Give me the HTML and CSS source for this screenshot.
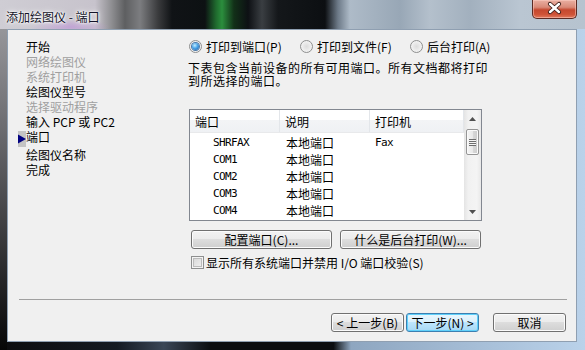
FILE: index.html
```html
<!DOCTYPE html>
<html lang="zh-CN">
  <head>
    <meta charset="UTF-8" />
    <title>添加绘图仪 - 端口</title>
    <link rel="stylesheet" href="styles.css">
  </head>

  <body>
    <div class="window">
      <div class="titlebar">
        <span class="title">添加绘图仪 - 端口</span>
        <div class="close">
          <svg width="45" height="19" viewBox="0 0 45 19">
            <path d="M18 5 L27 13 M27 5 L18 13" stroke="#3b1d18" stroke-width="4.2" stroke-linecap="round" fill="none" />
            <path d="M18 5 L27 13 M27 5 L18 13" stroke="#ffffff" stroke-width="2.4" stroke-linecap="round" fill="none" />
          </svg>
        </div>
      </div>

      <div class="client">
        <div class="main">
          <ul class="steps">
            <li>开始</li>
            <li class="off">网络绘图仪</li>
            <li class="off">系统打印机</li>
            <li>绘图仪型号</li>
            <li class="off">选择驱动程序</li>
            <li>输入 PCP 或 PC2</li>
            <li class="current">
              <svg class="marker" width="8" height="16" viewBox="0 0 8 16">
                <rect width="8" height="16" fill="#c4c4c4" />
                <polygon points="0,3.5 8,8 0,12.5" fill="#000080" />
              </svg>端口
            </li>
            <li>绘图仪名称</li>
            <li>完成</li>
          </ul>

          <div class="page">
            <div class="radios">
              <label class="opt opt1"><span class="radio on"></span>打印到端口(P)</label>
              <label class="opt opt2"><span class="radio"></span>打印到文件(F)</label>
              <label class="opt"><span class="radio"></span>后台打印(A)</label>
            </div>

            <p class="desc">下表包含当前设备的所有可用端口。所有文档都将打印<br>到所选择的端口。</p>

            <div class="listview">
              <div class="list-body">
                <div class="list-head">
                  <span>端口</span>
                  <span>说明</span>
                  <span>打印机</span>
                </div>
                <div class="list-rows">
                  <div class="row"><span class="mono">SHRFAX</span><span>本地端口</span><span class="mono">Fax</span></div>
                  <div class="row"><span class="mono">COM1</span><span>本地端口</span><span></span></div>
                  <div class="row"><span class="mono">COM2</span><span>本地端口</span><span></span></div>
                  <div class="row"><span class="mono">COM3</span><span>本地端口</span><span></span></div>
                  <div class="row"><span class="mono">COM4</span><span>本地端口</span><span></span></div>
                </div>
              </div>
              <div class="scrollbar">
                <div class="arrow">
                  <svg width="17" height="17" viewBox="0 0 17 17"><polygon points="5,11 12,11 8.5,7" fill="#505050" /></svg>
                </div>
                <div class="track"><div class="thumb"><span class="grip"></span></div></div>
                <div class="arrow">
                  <svg width="17" height="17" viewBox="0 0 17 17"><polygon points="5,7 12,7 8.5,11" fill="#505050" /></svg>
                </div>
              </div>
            </div>

            <div class="actions">
              <button class="btn wide">配置端口(C)...</button>
              <button class="btn wide">什么是后台打印(W)...</button>
            </div>

            <label class="check-row"><span class="checkbox"></span>显示所有系统端口并禁用 I/O 端口校验(S)</label>
          </div>
        </div>

        <hr class="sep" />

        <div class="footer">
          <button class="btn">&lt; 上一步(B)</button>
          <button class="btn default">下一步(N) &gt;</button>
          <button class="btn cancel">取消</button>
        </div>
      </div>
    </div>
  </body>
</html>
```

FILE: styles.css
```css
* {
  box-sizing: border-box;
}

body {
  margin: 0;
  font: 12px "Noto Sans CJK SC", sans-serif;
  color: #000;
}

.window {
  width: 585px;
  height: 350px;
  display: flex;
  flex-direction: column;
  padding: 0 8px 8px 7px;
  background:
    linear-gradient(180deg, #a2a2a6 0, #6e6e72 35%, #262628 80%, #060606 100%) left top / 7px 100% no-repeat,
    linear-gradient(90deg, #0c0c0e 0, #141a22 20%, #3a4656 28%, #0b0d10 36%, #0b0d10 57%, #8ea6c0 60%, #bad2ea 100%);
}

.titlebar {
  height: 29px;
  margin: 0 -8px 0 -7px;
  padding: 0 8px 0 6px;
  display: flex;
  align-items: flex-start;
  background:
    radial-gradient(ellipse 40px 8px at 70px 27px, rgba(190, 150, 215, 0.7), transparent),
    linear-gradient(90deg, #cfcdd4 0, #c7c3cc 95px, #8d8d90 112px, #5e5f61 125px, #7c7d80 140px, #3a3b3d 158px, #101316 172px, #0d1113 205px, #1f6a2e 216px, #2b8e3d 222px, #123018 234px, #0d1014 248px, #3a3e42 262px, #14171a 278px, #0c0f12 325px, #6d7a88 338px, #aebbc8 350px, #98a7b6 400px, #b4c0cc 430px, #a2b0be 470px, #bac6d2 520px, #b6c3cf 585px);
}

.title {
  margin-top: 9px;
  line-height: 15px;
  color: #141428;
  text-shadow: 0 0 6px #fff, 0 0 3px #fff, 0 0 2px #fff;
}

.close {
  margin-left: auto;
  width: 45px;
  height: 19px;
  border: 1px solid #5b2b24;
  border-top: 0;
  border-radius: 0 0 5px 5px;
  background: linear-gradient(180deg, #eab0a2 0, #d98a78 40%, #c5482f 55%, #cf5337 80%, #e07a5e 100%);
  box-shadow: inset 0 0 0 1px rgba(255, 210, 200, 0.5);
}

.close svg {
  display: block;
  margin: -1px 0 0 -1px;
}

.client {
  flex: 1;
  display: flex;
  flex-direction: column;
  background: #f0f0f0;
  border: 1px solid #8f9fb1;
}

.main {
  height: 269px;
  display: grid;
  grid-template-columns: 180px 1fr;
}

.steps {
  margin: 0;
  padding: 9px 0 0 18px;
  list-style: none;
  line-height: 15px;
}

.steps li {
  white-space: nowrap;
}

.steps .off {
  color: #a0a0a0;
}

.marker {
  margin-left: -8px;
  vertical-align: -5px;
}

.page {
  padding-top: 8px;
}

.radios {
  display: flex;
  height: 16px;
  align-items: center;
  padding-left: 1px;
}

.opt {
  display: flex;
  align-items: center;
  gap: 4px;
  white-space: nowrap;
}

.opt1 {
  width: 111px;
}

.opt2 {
  width: 110px;
}

.radio {
  width: 13px;
  height: 13px;
  border-radius: 50%;
  border: 1px solid #8e8f8f;
  background: radial-gradient(circle at 50% 50%, #dcdcdc 0, #f2f2f2 70%);
  display: flex;
  align-items: center;
  justify-content: center;
}

.radio.on::after {
  content: "";
  width: 7px;
  height: 7px;
  border-radius: 50%;
  background: radial-gradient(circle at 40% 35%, #c4ecff 0, #4ba6e8 45%, #1457a8 100%);
  box-shadow: 0 0 0 1px #4a78a8;
}

.desc {
  margin: 7px 0 0;
  line-height: 13px;
  letter-spacing: 0.5px;
  white-space: nowrap;
}

.listview {
  margin: 22px 0 0 1px;
  width: 293px;
  height: 112px;
  border: 1px solid #828790;
  background: #fff;
  display: flex;
}

.list-body {
  flex: 1;
  overflow: hidden;
}

.list-head,
.row {
  display: grid;
  grid-template-columns: 90px 90px 1fr;
}

.list-head {
  height: 23px;
  background: linear-gradient(180deg, #fff 0, #fff 45%, #f3f4f6 45%, #eff1f4 100%);
  border-bottom: 1px solid #e8e9eb;
}

.list-head span {
  padding: 3px 0 0 5px;
  line-height: 17px;
  border-right: 1px solid #e3e6ea;
}

.list-rows {
  padding-top: 1px;
}

.row {
  height: 17px;
  line-height: 17px;
}

.row span:first-child {
  padding-left: 23px;
}

.row span:nth-child(2) {
  padding-left: 6px;
}

.row span:nth-child(3) {
  padding-left: 5px;
}

.mono {
  font: 11px "DejaVu Sans Mono", monospace;
  letter-spacing: -0.6px;
  line-height: 17px;
}

.scrollbar {
  width: 17px;
  display: flex;
  flex-direction: column;
  background: linear-gradient(90deg, #e4e4e4 0, #f1f1f1 25%, #f4f4f4 75%, #e8e8e8 100%);
}

.arrow {
  height: 17px;
}

.arrow svg {
  display: block;
}

.track {
  flex: 1;
  padding: 2px 2px 0;
}

.thumb {
  height: 26px;
  border: 1px solid #959595;
  border-radius: 2px;
  background: linear-gradient(90deg, #f6f6f6 0, #e9e9e9 50%, #d8d8d8 51%, #cdcdcd 100%);
  box-shadow: inset 0 0 0 1px #fafafa;
  display: flex;
  align-items: center;
  justify-content: center;
}

.grip {
  width: 7px;
  height: 7px;
  background: repeating-linear-gradient(180deg, #6d6d6d 0, #6d6d6d 1px, #f4f4f4 1px, #f4f4f4 2px);
}

.actions {
  display: flex;
  gap: 8px;
  margin: 9px 0 0 3px;
}

.btn {
  height: 19px;
  width: 73px;
  padding: 0;
  border: 1px solid #707070;
  border-radius: 3px;
  background: linear-gradient(180deg, #f2f2f2 0, #ebebeb 50%, #dddddd 50%, #cfcfcf 100%);
  box-shadow: inset 0 0 0 1px #fbfbfb;
  font: inherit;
  line-height: 15px;
  color: #000;
  white-space: nowrap;
}

.btn.wide {
  width: 141px;
}

.btn.default {
  border-color: #3c7fb1;
  background: linear-gradient(180deg, #eaf6fd 0, #d9f0fc 50%, #bee6fd 50%, #a7d9f5 100%);
  box-shadow: inset 0 0 0 1px #5fd0fa;
}

.btn.cancel {
  margin-left: 12px;
}

.check-row {
  display: flex;
  align-items: center;
  gap: 2px;
  height: 13px;
  margin: 7px 0 0 3px;
  white-space: nowrap;
}

.checkbox {
  width: 13px;
  height: 13px;
  border: 1px solid #8e8f8f;
  background: linear-gradient(135deg, #d4d4d4 0, #f4f4f4 100%);
  box-shadow: inset 0 0 0 1px #f4f4f4, inset 0 0 0 2px #bcbcbc;
}

.sep {
  margin: 0 9px 0 11px;
  border: 0;
  border-top: 1px solid #a0a0a0;
}

.footer {
  display: flex;
  justify-content: flex-end;
  gap: 2px;
  margin-top: 13px;
  padding-right: 10px;
}
```
